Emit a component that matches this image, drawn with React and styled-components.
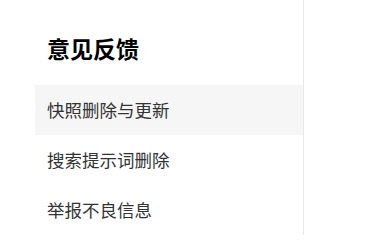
import styled, { createGlobalStyle } from "styled-components";

const GlobalStyle = createGlobalStyle`
  html, body {
    margin: 0;
    padding: 0;
    background: #fff;
    font-family: "Noto Sans CJK SC", "Noto Sans", sans-serif;
  }
`;

const Page = styled.div`
  display: flex;
  min-height: 235px;
`;

const Sidebar = styled.aside`
  width: 268px;
  margin-left: 35px;
  border-right: 1px solid #e8e8e8;
  display: flex;
  flex-direction: column;
`;

const Title = styled.h2`
  margin: 33px 0 22px;
  padding-left: 12px;
  font-size: 23px;
  line-height: 30px;
  font-weight: 700;
  color: #000;
`;

const Item = styled.a`
  display: block;
  height: 50px;
  line-height: 49px;
  padding-left: 12px;
  font-size: 17.5px;
  color: #333;
  text-decoration: none;
  cursor: pointer;
  background: ${(p) => (p.$active ? "#f6f6f6" : "transparent")};

  &:hover {
    background: #f6f6f6;
  }
`;

const items = ["快照删除与更新", "搜索提示词删除", "举报不良信息"];

export default function App() {
  return (
    <>
      <GlobalStyle />
      <Page>
        <Sidebar>
          <Title>意见反馈</Title>
          {items.map((label, i) => (
            <Item key={label} $active={i === 0}>
              {label}
            </Item>
          ))}
        </Sidebar>
      </Page>
    </>
  );
}
